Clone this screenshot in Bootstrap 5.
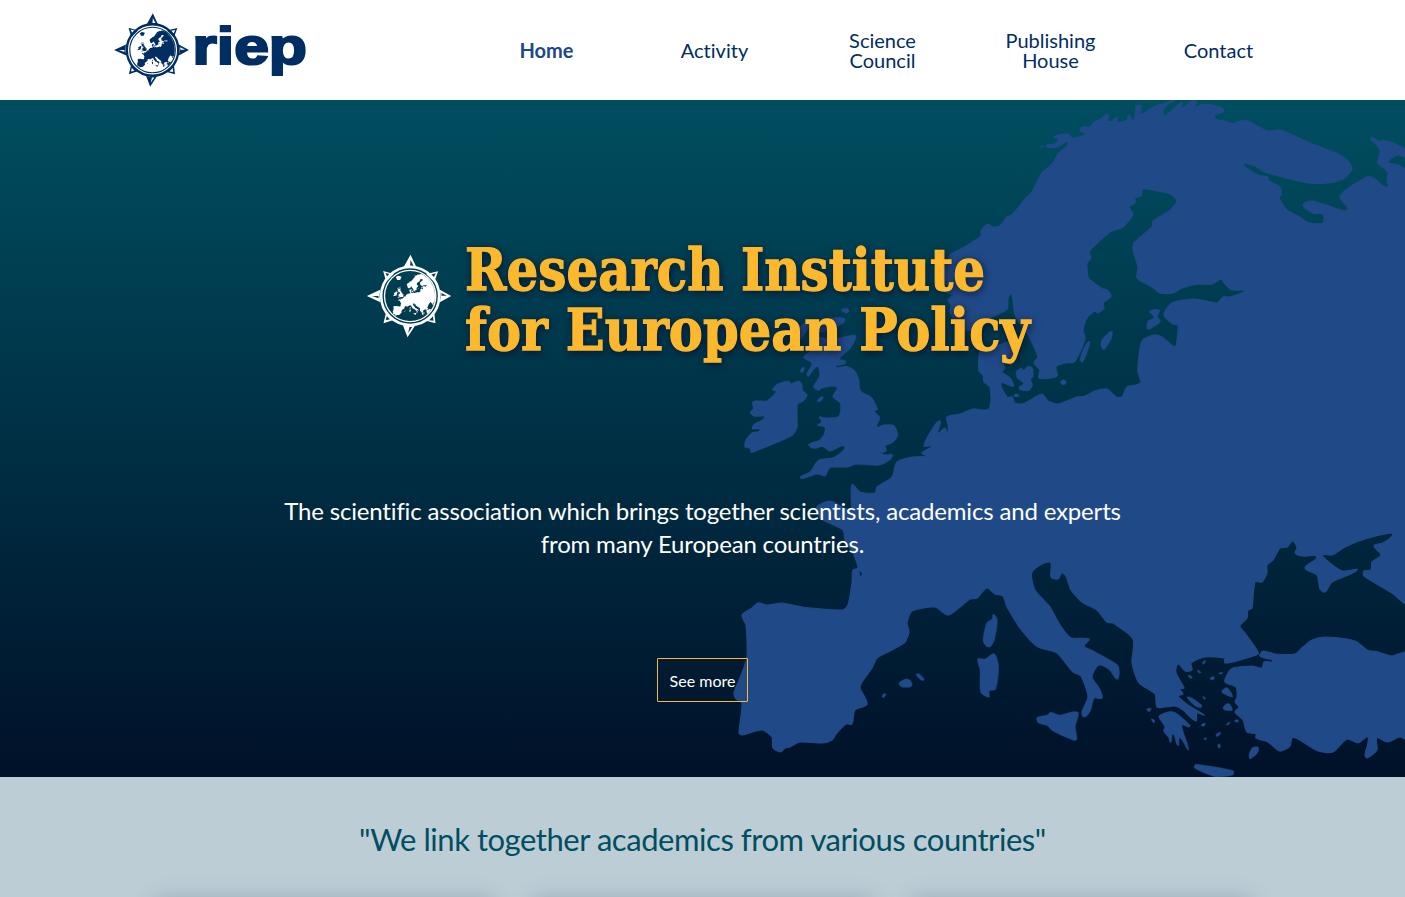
<!DOCTYPE html>
<html lang="en">
<head>
<meta charset="utf-8">
<meta name="viewport" content="width=device-width, initial-scale=1">
<title>Research Institute for European Policy</title>
<link href="https://cdn.jsdelivr.net/npm/bootstrap@5.3.0/dist/css/bootstrap.min.css" rel="stylesheet">
<style>
body{font-family:Lato,sans-serif;height:897px;overflow:hidden;color:#002d62;font-variant-ligatures:no-common-ligatures}
.lig{font-variant-ligatures:normal}
.wrap{width:1200px;margin:0 auto}
.topbar{height:100px;background:#fff}
.brand{margin-left:11px;line-height:0}
.menu{width:840px}
.menu .nav-link{width:168px;padding:0 36px;font-size:20px;line-height:20px;text-align:center;color:#002d62}
.menu .nav-link.active{color:#204886;font-weight:700}
.hero{height:677px;background:linear-gradient(#004e60,#001129);overflow:hidden}
.map{position:absolute;right:0;top:0}
.hero-top{padding-top:139px}
.emblem{margin:15px 13px 0 0}
.hero-title{font-family:"Roboto Slab","DejaVu Serif",serif;font-weight:700;font-size:58px;line-height:60px;margin:0;white-space:nowrap}
.title-svg{overflow:visible;filter:drop-shadow(1px 2px 4px rgba(0,10,40,.75))}
.intro{font-size:24px;letter-spacing:-.17px;line-height:33px;color:#fff;width:870px;margin:135px auto 0}
.more{border:1px solid #fdb92e;border-radius:1px;color:#fff;font-size:16px;width:91px;height:44px;padding:2px 0 0;line-height:40px;margin-top:98px}
.links{height:120px;background:#bdcdd6;overflow:hidden}
.links h2{font-size:31px;letter-spacing:-.45px;line-height:38px;color:#004e60;padding-top:43px;margin:0;font-weight:400}
.tiles{gap:40px;padding-top:43px}
.tile{width:338px;height:100px;box-shadow:0 0 22px rgba(0,40,60,.25);background:#bdcdd6}
</style>
</head>
<body>
<header class="topbar">
 <div class="wrap d-flex align-items-center justify-content-between h-100">
  <a class="brand" href="#" aria-label="riep">
   <svg width="194" height="76" viewBox="0 0 194 76">
    <svg x="-0.5" y="0.5" width="76" height="75" viewBox="20 58 257 252" color="#002d62"><use href="#compass"/></svg>
    <text x="78.5" y="51.5" font-family="Liberation Sans,sans-serif" font-weight="700" font-size="52" fill="#002d62" stroke="#002d62" stroke-width="2.2" textLength="114.5" lengthAdjust="spacingAndGlyphs">riep</text>
   </svg>
  </a>
  <nav class="menu nav align-items-center flex-nowrap">
   <a class="nav-link active" href="#">Home</a>
   <a class="nav-link" href="#">Activity</a>
   <a class="nav-link" href="#">Science Council</a>
   <a class="nav-link" href="#">Publishing House</a>
   <a class="nav-link" href="#">Contact</a>
  </nav>
 </div>
</header>

<section class="hero position-relative">
 <svg class="map" width="680" height="677" viewBox="725 100 680 677">
  <defs>
  <g id="europe">
   <path d="M1175 100L1163 104 1158 105 1150 109 1143 114 1140 113 1141 106 1136 106 1136 110 1134 120 1132 120 1129 115 1127 120 1122 122 1117 122 1117 117 1112 121 1107 121 1109 115 1105 115 1102 118 1093 123 1090 127 1082 127 1080 131 1086 134 1073 138 1068 134 1060 135 1054 137 1059 139 1054 144 1047 145 1047 147 1057 147 1068 141 1067 146 1058 154 1053 163 1042 173 1032 192 1027 197 1012 215 1007 217 1000 226 992 227 988 224 981 231 981 236 963 248 950 255 944 270 941 280 948 286 945 292 952 295 948 300 951 305 950 312 957 322 966 330 978 330 985 322 992 317 1007 309 1008 298 1011 294 1013 300 1015 315 1028 335 1038 357 1034 363 1040 370 1039 378 1057 376 1056 367 1065 363 1074 362 1080 352 1085 338 1083 330 1087 318 1095 311 1098 313 1104 308 1103 303 1111 296 1107 290 1103 289 1090 280 1088 277 1087 263 1091 258 1089 252 1093 247 1110 232 1123 227 1133 214 1129 207 1135 203 1135 198 1141 196 1143 189 1163 192 1172 195 1177 201 1174 206 1168 212 1153 221 1152 227 1134 243 1133 250 1138 267 1137 278 1152 287 1160 293 1173 293 1182 288 1198 284 1212 284 1221 279 1225 284 1232 290 1244 290 1244 292 1230 297 1223 297 1217 303 1195 299 1172 303 1164 315 1173 324 1178 325 1177 340 1176 346 1173 346 1162 337 1157 335 1150 336 1143 340 1140 348 1138 372 1141 382 1136 385 1127 387 1122 397 1116 397 1107 389 1095 391 1085 396 1077 397 1058 404 1048 401 1042 394 1032 399 1022 404 1015 403 1012 397 1007 397 1001 383 1013 386 1010 378 1002 372 1005 368 1003 362 1012 356 1009 342 1002 344 990 349 980 352 979 371 983 375 984 382 990 387 989 409 973 409 960 414 947 417 948 425 948 433 945 428 938 433 940 421 933 428 924 446 932 446 922 453 927 456 913 457 897 462 892 477 877 487 875 493 860 492 852 485 851 510 844 508 830 501 817 507 820 518 843 530 845 540 853 553 858 568 853 570 852 583 848 605 843 610 802 607 782 603 767 605 758 603 752 608 742 615 746 625 747 657 742 673 734 693 736 699 742 703 739 733 742 735 762 730 772 737 773 748 781 752 785 748 790 747 800 742 822 743 832 740 836 734 846 724 852 724 855 710 867 704 860 688 862 682 872 668 877 658 892 650 905 642 909 632 907 623 912 611 935 607 948 615 960 607 970 599 977 598 987 588 995 594 1003 596 1007 607 1023 632 1038 647 1057 653 1073 672 1081 676 1088 697 1082 712 1084 717 1090 711 1094 698 1102 698 1099 688 1092 677 1099 665 1110 670 1117 679 1119 673 1117 665 1093 651 1084 646 1089 639 1071 638 1060 625 1050 607 1035 590 1032 572 1050 562 1051 577 1058 579 1062 573 1066 576 1071 590 1082 602 1097 610 1107 622 1113 623 1133 639 1132 663 1139 683 1155 694 1157 707 1165 707 1175 706 1183 710 1196 721 1197 713 1204 715 1188 705 1178 696 1183 694 1180 689 1184 688 1176 673 1178 664 1185 671 1192 670 1191 663 1205 657 1224 658 1225 663 1240 660 1258 654 1257 650 1245 633 1240 626 1247 618 1248 610 1252 608 1255 582 1262 582 1267 573 1267 565 1273 560 1280 548 1287 547 1293 541 1297 548 1295 553 1302 556 1317 557 1305 568 1317 575 1320 589 1325 592 1332 582 1357 570 1342 571 1322 555 1332 555 1345 547 1365 539 1391 533 1393 535 1383 543 1374 546 1381 555 1372 562 1371 570 1364 571 1364 576 1392 593 1406 603 1406 170 1398 165 1388 162 1398 155 1406 157 1406 150 1388 141 1378 141 1372 137 1371 139 1380 150 1378 163 1388 172 1387 180 1388 187 1383 186 1375 179 1367 177 1340 196 1348 208 1345 211 1332 207 1312 201 1303 205 1313 213 1323 214 1323 223 1309 223 1298 216 1287 210 1279 198 1281 195 1280 187 1268 180 1268 177 1258 175 1243 164 1255 166 1265 172 1308 183 1328 183 1343 179 1352 169 1348 161 1338 154 1328 150 1308 142 1280 130 1267 131 1248 121 1240 121 1233 124 1228 122 1215 119 1215 115 1224 111 1220 107 1203 104 1195 107 1197 100 1193 100 1182 108 1182 102 1165 116 1163 110 1168 104Z"/>
   <path d="M1406 653L1392 656 1378 652 1367 650 1357 642 1347 639 1325 637 1312 640 1303 647 1295 654 1275 654 1263 651 1260 656 1273 660 1272 662 1264 662 1262 668 1252 666 1233 668 1228 673 1225 682 1236 687 1237 697 1235 702 1239 707 1235 712 1243 720 1247 732 1256 734 1256 738 1268 742 1280 751 1290 746 1292 738 1298 739 1318 751 1333 752 1347 739 1358 743 1368 737 1365 755 1367 758 1377 750 1377 738 1387 742 1400 737 1406 739Z"/>
   <!-- British Isles -->
   <g transform="translate(730 300) scale(.33333)">
    <path d="M262 112L300 118 375 104 378 115 362 145 330 176 347 182 345 192 318 200 350 198 375 212 387 238 392 272 425 292 443 328 434 334 450 353 441 380 460 374 492 376 504 406 488 428 467 438 470 452 456 462 488 464 480 480 448 496 375 494 352 502 300 504 286 528 262 523 245 528 210 534 240 515 265 480 310 472 343 440 300 454 278 440 252 446 235 434 268 420 282 402 284 382 262 376 274 365 268 350 285 353 326 348 330 310 308 290 320 262 272 266 268 272 250 262 268 228 262 200 235 230 230 222 245 190 220 172 245 150Z"/>
    <path d="M177 242L182 250 207 243 216 252 218 270 232 285 220 304 203 314 202 383 185 408 80 453 63 458 60 446 44 442 47 420 65 398 90 390 66 386 72 372 103 352 74 350 60 338 70 325 66 308 75 302 110 302 138 275 127 270 142 252Z"/>
    <path d="M262 305L270 292 280 290 276 300ZM210 215L218 202 224 203 218 217ZM195 115L215 75 240 65 222 105 204 124ZM260 75L318 52 345 56 340 70 300 88 258 98ZM334 30L350 25 358 33 350 39Z"/>
   </g>
   <!-- Baltic islands -->
   <g transform="translate(960 280) scale(.33333)">
    <path d="M168 275L185 263 190 270 205 258 218 264 219 290 212 300 218 314 207 332 180 330 176 322 190 310 172 295ZM388 184L382 215 368 247 360 240 367 215ZM455 153L454 176 432 209 423 200 425 180ZM568 95L585 88 600 92 592 108 602 124 590 135 563 148 563 125 582 112ZM302 303L312 299 320 307 312 315 304 312ZM161 346L170 341 178 348 168 351ZM150 255L145 246 160 246 158 254Z"/>
   </g>
   <path d="M1041 147L1042 146 1043 147Z"/>
   <!-- Mediterranean islands -->
   <g transform="translate(960 540) scale(.33333)">
    <path d="M100 222L112 240 104 298 92 320 80 320 69 302 80 248 96 237ZM53 356L75 357 103 341 116 380 107 448 88 453 87 472 62 457 60 390ZM230 533L262 525 272 516 298 525 353 516 346 560 351 598 343 602 278 573 262 557 235 549ZM560 508L573 505 568 515ZM574 537L584 541 582 549ZM-184 430L-164 417 -150 420 -143 434 -149 441 -174 441ZM-132 403L-122 402 -107 418 -112 422 -120 418ZM-234 469L-227 460 -222 464 -230 473Z"/>
   </g>
   <!-- Peloponnese -->
   <g transform="translate(960 540) scale(.33333)">
    <path d="M596 530L610 520 632 514 650 520 690 555 688 562 666 556 686 630 664 597 658 595 654 618 642 585 637 583 632 608 625 592 610 573 614 560Z"/>
   </g>
   <!-- Aegean islands, Crete, Rhodes -->
   <g transform="translate(1165 520) scale(.33333)">
    <path d="M68 530L110 555 108 563 90 558ZM92 733L205 752 204 765 150 770 88 744ZM252 705L262 683 280 682 278 698 255 717ZM170 515L186 503 204 530 190 528ZM174 562L190 550 202 570 178 570ZM112 428L122 422 116 433ZM135 475L146 469 148 476 140 480ZM70 465L82 472 75 475ZM97 450L108 457 102 459ZM161 460L173 457 170 462ZM108 616L120 609 118 618ZM153 643L167 637 163 646 156 650ZM184 613L195 606 190 615ZM208 602L220 600 218 607ZM158 675L163 671 167 681 161 684ZM117 655L124 654 122 660ZM114 529L122 536 118 538Z"/>
   </g>
  </g>
  <clipPath id="disc"><circle cx="152" cy="184" r="75"/></clipPath>
  <g id="compass" fill="currentColor" stroke="none">
   <path fill-rule="evenodd" d="M153 60L172 100Q152 93 132 98ZM153 76L152 93 162 93ZM22 184L62 165Q58 184 63 203ZM38 184L57 191 57 184ZM275 184L241 165Q246 184 241 203ZM262 183L246 175 246 183ZM144 308L130 271Q150 277 168 271ZM146 295L150 277 158 277ZM71 109L103 118 80 141ZM78 115L84 128 94 119ZM236 110L200 118 224 142ZM229 116L212 120 223 128ZM72 266L80 232 102 256ZM79 257L91 254 82 244ZM228 266L224 232 200 258ZM222 258L220 244 209 257Z"/>
   <circle cx="152" cy="184" r="87" fill="none" stroke="currentColor" stroke-width="8"/>
   <circle cx="152" cy="184" r="77" fill="none" stroke="currentColor" stroke-width="4"/>
   <g clip-path="url(#disc)"><use href="#europe" transform="translate(111 229) scale(.205 .195) translate(-790 -680)"/><path d="M109 127L116 123 126 126 122 136 113 136Z"/></g>
  </g>
  </defs>
  <use href="#europe" fill="#204a87" stroke="#204a87" stroke-width="1.2" stroke-linejoin="round"/>
  <path d="M859 571l3 2-1 4z" fill="#00263a"/>
 </svg>

 <div class="position-relative d-flex flex-column align-items-center text-center">
  <div class="hero-top d-flex justify-content-center">
   <svg class="emblem flex-shrink-0" width="86" height="84" viewBox="20 58 257 252" color="#fff"><use href="#compass"/></svg>
   <h1 class="hero-title">
    <svg class="title-svg" width="574" height="120" viewBox="0 0 574 120" fill="#fdb92e" stroke="#fdb92e" stroke-width="1.3">
     <text x="0" y="51" textLength="520" lengthAdjust="spacingAndGlyphs">Research Institute</text>
     <text x="0" y="111" textLength="565" lengthAdjust="spacingAndGlyphs">for European Policy</text>
    </svg>
   </h1>
  </div>
  <p class="intro">The scienti<span class="lig">fi</span>c association which brings together scientists, academics and experts from many European countries.</p>
  <a class="btn more" href="#">See more</a>
 </div>
</section>

<section class="links text-center">
 <h2>"We link together academics from various countries"</h2>
 <div class="tiles wrap d-flex justify-content-center">
  <div class="tile"></div><div class="tile"></div><div class="tile"></div>
 </div>
</section>
<script src="https://cdn.jsdelivr.net/npm/bootstrap@5.3.0/dist/js/bootstrap.bundle.min.js"></script>
<script>
// Round the coastlines: turn each polygon into a gentle spline through its points.
const tension = 0.11;
document.querySelectorAll('#europe path').forEach(path => {
  const rings = path.getAttribute('d').split('Z').filter(s => s.trim());
  path.setAttribute('d', rings.map(ring => {
    const n = ring.match(/-?[\d.]+/g).map(Number), p = [];
    for (let i = 0; i < n.length; i += 2) p.push([n[i], n[i + 1]]);
    const at = i => p[(i + p.length) % p.length];
    let d = 'M' + p[0];
    for (let i = 0; i < p.length; i++) {
      const [a, b, c, e] = [at(i - 1), at(i), at(i + 1), at(i + 2)];
      const len = Math.hypot(c[0] - b[0], c[1] - b[1]);
      const unit = (u, v) => { const h = Math.hypot(v[0] - u[0], v[1] - u[1]) || 1; return [(v[0] - u[0]) / h, (v[1] - u[1]) / h]; };
      const s = unit(a, c), t = unit(b, e), k = len * tension * 2;
      d += `C${b[0] + s[0] * k},${b[1] + s[1] * k} ${c[0] - t[0] * k},${c[1] - t[1] * k} ${c}`;
    }
    return d + 'Z';
  }).join(''));
});
</script>
</body>
</html>
